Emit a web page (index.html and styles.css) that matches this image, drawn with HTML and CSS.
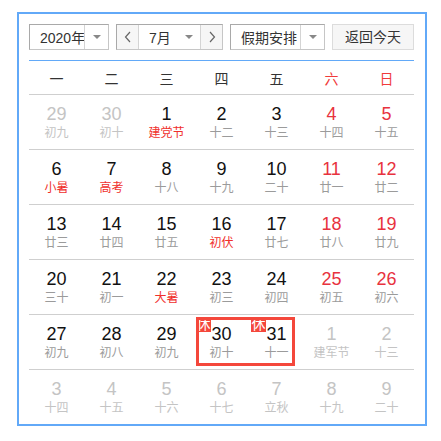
FILE: index.html
```html
<!DOCTYPE html>
<html lang="zh-CN">
<head>
	<meta charset="UTF-8">
	<title>万年历</title>
	<link rel="stylesheet" href="styles.css">
</head>
<body>
	<div id="calendar">
		<div class="toolbar">
			<div class="select year-select">
				<span class="select-text">2020年</span>
				<span class="select-caret"><i class="caret"></i></span>
			</div>
			<div class="select month-select">
				<span class="arrow"><svg width="8" height="12" viewBox="0 0 8 12"><polyline points="6,1 1.5,6 6,11" fill="none" stroke="#666" stroke-width="1.2"/></svg></span>
				<span class="month-text">7月<i class="caret"></i></span>
				<span class="arrow"><svg width="8" height="12" viewBox="0 0 8 12"><polyline points="2,1 6.5,6 2,11" fill="none" stroke="#666" stroke-width="1.2"/></svg></span>
			</div>
			<div class="select holiday-select">
				<span class="select-text">假期安排</span>
				<span class="select-caret"><i class="caret"></i></span>
			</div>
			<div class="btn-today">返回今天</div>
		</div>
		<div class="week-head">
			<span>一</span><span>二</span><span>三</span><span>四</span><span>五</span><span class="red">六</span><span class="red">日</span>
		</div>
		<div id="days"></div>
	</div>
	<script>
		var aDays = [
			[29,'初九','other'],[30,'初十','other'],[1,'建党节','fest'],[2,'十二'],[3,'十三'],[4,'十四'],[5,'十五'],
			[6,'小暑','fest'],[7,'高考','fest'],[8,'十八'],[9,'十九'],[10,'二十'],[11,'廿一'],[12,'廿二'],
			[13,'廿三'],[14,'廿四'],[15,'廿五'],[16,'初伏','fest'],[17,'廿七'],[18,'廿八'],[19,'廿九'],
			[20,'三十'],[21,'初一'],[22,'大暑','fest'],[23,'初三'],[24,'初四'],[25,'初五'],[26,'初六'],
			[27,'初九'],[28,'初八'],[29,'初九'],[30,'初十','rest'],[31,'十一','rest'],[1,'建军节','other'],[2,'十三','other'],
			[3,'十四','other'],[4,'十五','other'],[5,'十六','other'],[6,'十七','other'],[7,'立秋','other'],[8,'十九','other'],[9,'二十','other']
		];
		var oDays = document.getElementById('days');
		var html = '';
		for(var r=0; r<6; r++){
			html += '<div class="row">';
			for(var c=0; c<7; c++){
				var d = aDays[r*7+c];
				var cls = 'day';
				if(c>=5) cls += ' weekend';
				if(d[2]) cls += ' ' + d[2];
				html += '<div class="'+cls+'">';
				if(d[2]=='rest') html += '<i class="badge">休</i>';
				html += '<b class="num">'+d[0]+'</b><span class="lunar">'+d[1]+'</span></div>';
			}
			if(r==4) html += '<div class="holiday-box"></div>';
			html += '</div>';
		}
		oDays.innerHTML = html;
	</script>
</body>
</html>
```

FILE: styles.css
```css
*{
	margin: 0;
	padding: 0;
	box-sizing: border-box;
}
body{
	font-family: "Liberation Sans", "Noto Sans CJK SC", sans-serif;
	color: #222;
	background: #fff;
}
#calendar{
	width: 410px;
	height: 414px;
	margin: 12px 0 0 17px;
	border: 2px solid #62a9f8;
	padding: 10px 11px 0 10px;
}
.toolbar{
	display: flex;
	height: 26px;
	font-size: 14px;
	white-space: nowrap;
}
.select{
	display: flex;
	height: 26px;
	border: 1px solid #c6c6c6;
	border-top-color: #a9a9a9;
	border-left-color: #a9a9a9;
	background: #fff;
}
.select-text{
	display: flex;
	align-items: center;
	padding-left: 10px;
	color: #333;
}
.select-caret{
	display: flex;
	align-items: center;
	justify-content: center;
	border-left: 1px solid #d4d4d4;
}
.caret{
	display: inline-block;
	width: 0;
	height: 0;
	border-left: 4px solid transparent;
	border-right: 4px solid transparent;
	border-top: 4px solid #888;
}
.year-select{
	width: 80px;
}
.year-select .select-text{
	width: 55px;
	padding-left: 10px;
	overflow: hidden;
}
.year-select .select-caret{
	width: 24px;
}
.month-select{
	width: 107px;
	margin-left: 7px;
}
.arrow{
	width: 22px;
	display: flex;
	align-items: center;
	justify-content: center;
	background: #f6f6f6;
}
.month-select .arrow:last-child{
	border-left: 1px solid #d4d4d4;
}
.month-select .arrow:first-child{
	border-right: 1px solid #d4d4d4;
}
.month-text{
	flex: 1;
	display: flex;
	align-items: center;
	justify-content: space-between;
	padding: 0 7px 0 10px;
	color: #333;
}
.holiday-select{
	width: 95px;
	margin-left: 7px;
}
.holiday-select .select-text{
	width: 70px;
}
.holiday-select .select-caret{
	width: 24px;
}
.btn-today{
	width: 82px;
	margin-left: 7px;
	height: 26px;
	line-height: 24px;
	text-align: center;
	border: 1px solid #dcdcdc;
	background: #f6f6f6;
	color: #333;
}
.week-head{
	margin-top: 10px;
	border-top: 1px solid #62a9f8;
	border-bottom: 1px solid #cfcfcf;
	height: 35px;
	display: grid;
	grid-template-columns: repeat(7, 55px);
	align-items: center;
	font-size: 14px;
	color: #333;
}
.week-head span{
	text-align: center;
}
.week-head .red{
	color: #f03b3b;
}
.row{
	position: relative;
	display: grid;
	grid-template-columns: repeat(7, 55px);
	height: 55px;
	border-bottom: 1px solid #cfcfcf;
}
.row:last-child{
	border-bottom: none;
	height: 54px;
}
.day{
	position: relative;
	display: flex;
	flex-direction: column;
	align-items: center;
	padding-top: 9px;
}
.num{
	font-weight: normal;
	font-size: 18px;
	line-height: 20px;
	color: #111;
}
.lunar{
	font-size: 12px;
	line-height: 16px;
	margin-top: 1px;
	color: #9b9b9b;
}
.weekend .num{
	color: #e8323e;
}
.fest .lunar{
	color: #f0302c;
}
.other .num,
.other .lunar{
	color: #c4c4c4;
}
.badge{
	position: absolute;
	left: 2px;
	top: 2px;
	width: 15px;
	height: 15px;
	line-height: 15px;
	font-style: normal;
	font-size: 14px;
	text-align: center;
	color: #fff;
	background: #f4473b;
	overflow: hidden;
}
.holiday-box{
	position: absolute;
	left: 167px;
	top: 2px;
	width: 99px;
	height: 49px;
	border: 3px solid #f4473b;
	pointer-events: none;
}
```
